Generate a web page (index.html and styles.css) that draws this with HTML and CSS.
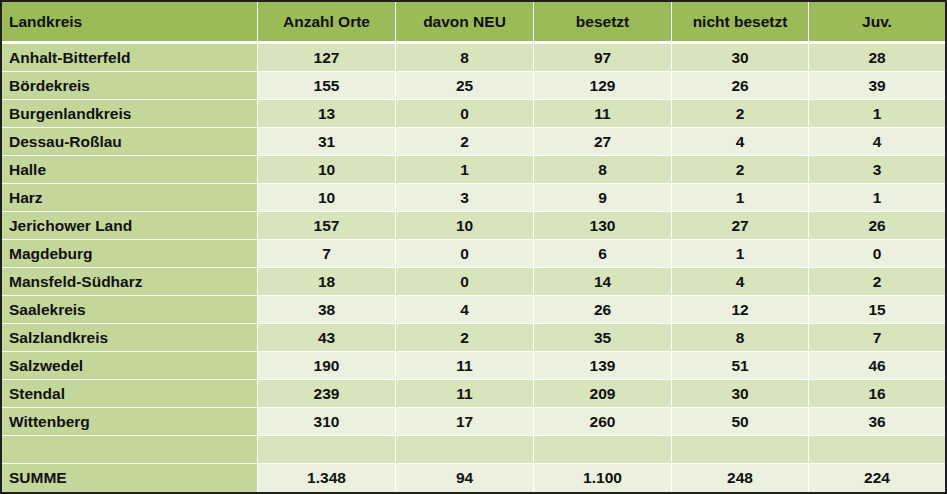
FILE: index.html
```html
<!DOCTYPE html>
<html lang="de">
<head>
<meta charset="utf-8">
<title>Landkreise</title>
<link rel="stylesheet" href="styles.css">
</head>
<body>
<div class="table">
  <div class="th first">Landkreis</div><div class="th">Anzahl Orte</div><div class="th">davon NEU</div><div class="th">besetzt</div><div class="th">nicht besetzt</div><div class="th">Juv.</div>

  <div class="name">Anhalt-Bitterfeld</div><div class="c odd">127</div><div class="c odd">8</div><div class="c odd">97</div><div class="c odd">30</div><div class="c odd">28</div>
  <div class="name">Bördekreis</div><div class="c even">155</div><div class="c even">25</div><div class="c even">129</div><div class="c even">26</div><div class="c even">39</div>
  <div class="name">Burgenlandkreis</div><div class="c odd">13</div><div class="c odd">0</div><div class="c odd">11</div><div class="c odd">2</div><div class="c odd">1</div>
  <div class="name">Dessau-Roßlau</div><div class="c even">31</div><div class="c even">2</div><div class="c even">27</div><div class="c even">4</div><div class="c even">4</div>
  <div class="name">Halle</div><div class="c odd">10</div><div class="c odd">1</div><div class="c odd">8</div><div class="c odd">2</div><div class="c odd">3</div>
  <div class="name">Harz</div><div class="c even">10</div><div class="c even">3</div><div class="c even">9</div><div class="c even">1</div><div class="c even">1</div>
  <div class="name">Jerichower Land</div><div class="c odd">157</div><div class="c odd">10</div><div class="c odd">130</div><div class="c odd">27</div><div class="c odd">26</div>
  <div class="name">Magdeburg</div><div class="c even">7</div><div class="c even">0</div><div class="c even">6</div><div class="c even">1</div><div class="c even">0</div>
  <div class="name">Mansfeld-Südharz</div><div class="c odd">18</div><div class="c odd">0</div><div class="c odd">14</div><div class="c odd">4</div><div class="c odd">2</div>
  <div class="name">Saalekreis</div><div class="c even">38</div><div class="c even">4</div><div class="c even">26</div><div class="c even">12</div><div class="c even">15</div>
  <div class="name">Salzlandkreis</div><div class="c odd">43</div><div class="c odd">2</div><div class="c odd">35</div><div class="c odd">8</div><div class="c odd">7</div>
  <div class="name">Salzwedel</div><div class="c even">190</div><div class="c even">11</div><div class="c even">139</div><div class="c even">51</div><div class="c even">46</div>
  <div class="name">Stendal</div><div class="c odd">239</div><div class="c odd">11</div><div class="c odd">209</div><div class="c odd">30</div><div class="c odd">16</div>
  <div class="name">Wittenberg</div><div class="c even">310</div><div class="c even">17</div><div class="c even">260</div><div class="c even">50</div><div class="c even">36</div>
  <div class="name"></div><div class="c odd"></div><div class="c odd"></div><div class="c odd"></div><div class="c odd"></div><div class="c odd"></div>
  <div class="name">SUMME</div><div class="c even">1.348</div><div class="c even">94</div><div class="c even">1.100</div><div class="c even">248</div><div class="c even">224</div>
</div>
</body>
</html>
```

FILE: styles.css
```css
html, body {
  margin: 0;
  padding: 0;
  background: #ffffff;
}

.table {
  display: grid;
  grid-template-columns: 255px 137px 137px 137px 136px 136px;
  grid-template-rows: 41px repeat(15, 27px) 28px;
  column-gap: 1px;
  row-gap: 1px;
  width: 943px;
  height: 490px;
  border: 2px solid #1f1f1f;
  background: #ffffff;
  font-family: "Liberation Sans", Arial, sans-serif;
  font-weight: bold;
  font-size: 15.5px;
  color: #111111;
}

.table > div {
  display: flex;
  align-items: center;
  justify-content: center;
  white-space: nowrap;
}

.table > .th {
  background: #9bbb59;
  margin-bottom: 2px;
}

.table > .first,
.table > .name {
  justify-content: flex-start;
  padding-left: 7px;
}

.table > .name {
  background: #c4d79b;
}

.table > .odd {
  background: #d8e4bc;
}

.table > .even {
  background: #ebf1de;
}
```
